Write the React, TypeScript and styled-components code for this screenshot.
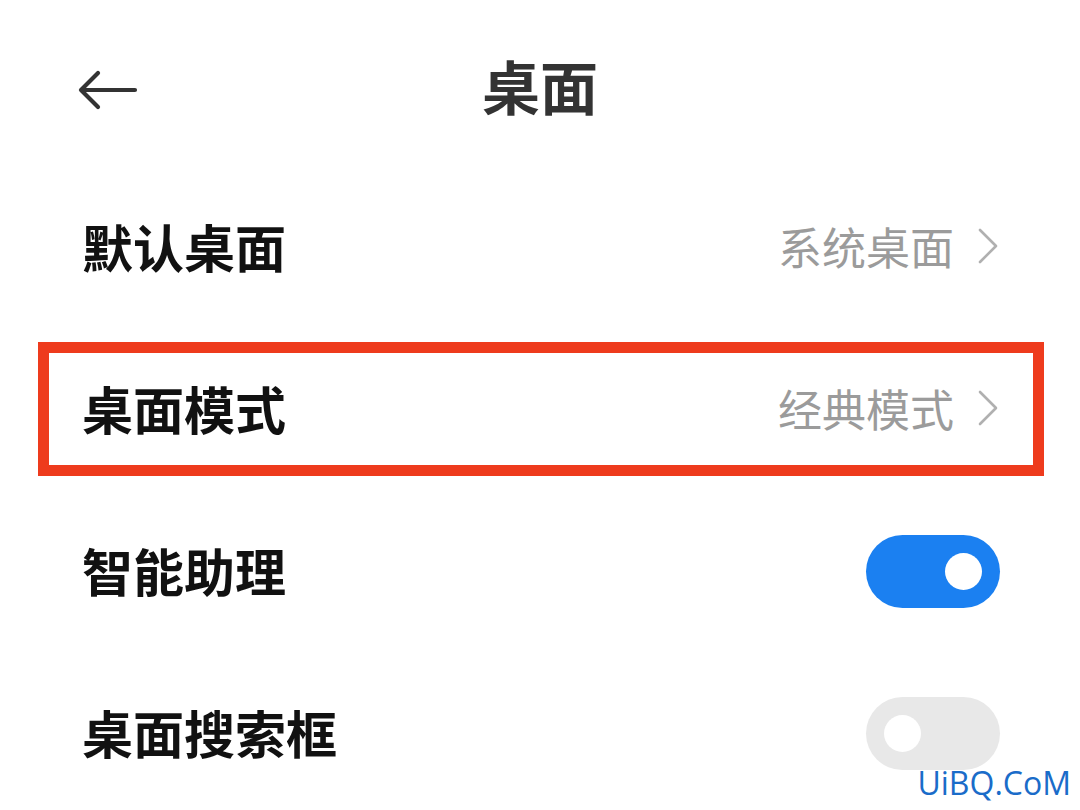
import styled, { createGlobalStyle } from "styled-components"

const GlobalStyle = createGlobalStyle`
    html, body {
        margin: 0;
        padding: 0;
        background: #ffffff;
    }
    body {
        font-family: "Noto Sans CJK SC", "Noto Sans", sans-serif;
    }
`

type Setting =
    | { label: string; kind: "link"; value: string; marked?: boolean }
    | { label: string; kind: "toggle"; on: boolean }

const settings: Setting[] = [
    { label: "默认桌面", kind: "link", value: "系统桌面" },
    { label: "桌面模式", kind: "link", value: "经典模式", marked: true },
    { label: "智能助理", kind: "toggle", on: true },
    { label: "桌面搜索框", kind: "toggle", on: false },
]

const BackArrow = () => (
    <svg width="60" height="40" viewBox="0 0 60 40" fill="none">
        <path
            d="M3 20 H57 M20 3 L3 20 L20 37"
            stroke="#333"
            strokeWidth="4.2"
            strokeLinecap="round"
            strokeLinejoin="round"
        />
    </svg>
)

const Chevron = () => (
    <svg width="20" height="36" viewBox="0 0 20 36" fill="none">
        <path d="M2 2 L18 18 L2 34" stroke="#b0b0b0" strokeWidth="2.6" strokeLinecap="round" strokeLinejoin="round" />
    </svg>
)

const SettingRow: React.FC<{ item: Setting }> = ({ item }) => (
    <Row marked={item.kind === "link" && !!item.marked}>
        <Label>{item.label}</Label>
        {item.kind === "link" ? (
            <Trail>
                <Value>{item.value}</Value>
                <Chevron />
            </Trail>
        ) : (
            <Switch on={item.on}>
                <Knob />
            </Switch>
        )}
    </Row>
)

export default function App() {
    return (
        <Page>
            <GlobalStyle />
            <Header>
                <BackButton>
                    <BackArrow />
                </BackButton>
                <Title>桌面</Title>
            </Header>
            <List>
                {settings.map((s) => (
                    <SettingRow key={s.label} item={s} />
                ))}
            </List>
            <Watermark>UiBQ.CoM</Watermark>
        </Page>
    )
}

const Page = styled.div`
    position: relative;
    width: 1080px;
    height: 810px;
    overflow: hidden;
    background: #fff;
`

const Header = styled.div`
    position: relative;
    display: flex;
    align-items: center;
    justify-content: center;
    height: 70px;
    margin-top: 50px;
`

const BackButton = styled.div`
    position: absolute;
    left: 78px;
    top: 20px;
    display: flex;
`

const Title = styled.h1`
    margin: 0;
    font-size: 58px;
    font-weight: 700;
    color: #333;
    line-height: 1;
`

const List = styled.div`
    display: flex;
    flex-direction: column;
    margin-top: 45px;
`

const Row = styled.div<{ marked: boolean }>`
    position: relative;
    display: flex;
    align-items: center;
    justify-content: space-between;
    height: 162px;
    padding: 0 80px 0 82px;

    &::after {
        content: "";
        display: ${({ marked }) => (marked ? "block" : "none")};
        position: absolute;
        left: 38px;
        right: 36px;
        top: 15px;
        bottom: 13px;
        border: 11px solid #ee3b1d;
    }
`

const Label = styled.span`
    font-size: 51px;
    font-weight: 700;
    color: #111;
    line-height: 1;
`

const Trail = styled.div`
    display: flex;
    align-items: center;
    gap: 24px;
    margin-right: 2px;
`

const Value = styled.span`
    font-size: 44px;
    color: #9b9b9b;
    line-height: 1;
`

const Switch = styled.div<{ on: boolean }>`
    display: flex;
    align-items: center;
    justify-content: ${({ on }) => (on ? "flex-end" : "flex-start")};
    width: 134px;
    height: 73px;
    margin-top: 2px;
    padding: 0 18px;
    box-sizing: border-box;
    border-radius: 37px;
    background: ${({ on }) => (on ? "#1b80f1" : "#e8e8e8")};
`

const Knob = styled.div`
    width: 37px;
    height: 37px;
    border-radius: 50%;
    background: #fff;
`

const Watermark = styled.div`
    position: absolute;
    right: 9px;
    bottom: 11px;
    font-family: "Open Sans", "DejaVu Sans", sans-serif;
    font-size: 32px;
    color: #1a6cc9;
    line-height: 1;
`
